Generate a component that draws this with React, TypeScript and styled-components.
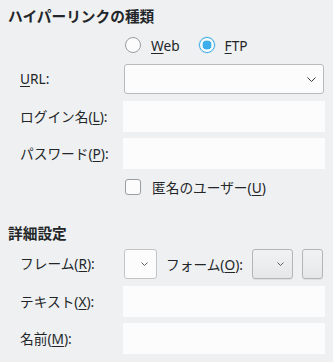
import React from "react";
import styled, { createGlobalStyle } from "styled-components";

const Global = createGlobalStyle`
  html, body { margin: 0; padding: 0; background: #eff0f1; }
  body {
    font-family: "Noto Sans", "Noto Sans CJK JP", sans-serif;
    font-size: 13.7px;
    color: #232629;
  }
  * { box-sizing: border-box; }
`;

const Page = styled.div`
  width: 333px;
  height: 362px;
  padding: 8px 8px 0 8px;
  display: flex;
  flex-direction: column;
  background: #eff0f1;
`;

const SectionTitle = styled.div<{ $mt?: number }>`
  font-weight: bold;
  font-size: 14.7px;
  line-height: 16px;
  height: 16px;
  margin-top: ${(p) => p.$mt ?? 0}px;
  white-space: nowrap;
`;

const Row = styled.div<{ $mt: number; $h: number }>`
  display: flex;
  align-items: center;
  height: ${(p) => p.$h}px;
  margin-top: ${(p) => p.$mt}px;
`;

const Label = styled.div`
  width: 115px;
  flex: none;
  padding-left: 12px;
  white-space: nowrap;
  line-height: 18px;
`;

const Spacer = styled.div`
  width: 115px;
  flex: none;
`;

const U = styled.span`
  text-decoration: underline;
  text-underline-offset: 2px;
`;

const TextField = styled.div`
  flex: 1;
  align-self: stretch;
  background: #fcfcfc;
`;

const Combo = styled.div`
  flex: 1;
  align-self: stretch;
  margin: 0 1px;
  background: #fcfcfc;
  border: 1px solid #b8babc;
  border-radius: 3px;
  display: flex;
  align-items: center;
  justify-content: flex-end;
  padding-right: 7px;
`;

const SmallCombo = styled.div<{ $w: number; $gray?: boolean }>`
  width: ${(p) => p.$w}px;
  flex: none;
  align-self: stretch;
  border: 1px solid ${(p) => (p.$gray ? "#b3b5b7" : "#c2c4c6")};
  border-radius: 3px;
  background: ${(p) =>
    p.$gray ? "linear-gradient(#f1f2f3, #e6e7e8)" : "#fcfcfc"};
  box-shadow: ${(p) => (p.$gray ? "0 1px 0 rgba(0,0,0,0.06)" : "none")};
  display: flex;
  align-items: center;
  justify-content: flex-end;
  padding-right: 8px;
`;

const FrameGroup = styled.div`
  flex: 1;
  align-self: stretch;
  display: flex;
  align-items: center;
  gap: 9px;
  padding-left: 1px;
`;

const InlineLabel = styled.span`
  white-space: nowrap;
`;

const Choice = styled.label`
  display: flex;
  align-items: center;
  gap: 10px;
  white-space: nowrap;
`;

const Choices = styled.div`
  display: flex;
  align-items: center;
  gap: 19px;
  padding-left: 2px;
`;

const RadioCircle = styled.span<{ $on?: boolean }>`
  width: 16px;
  height: 16px;
  border-radius: 50%;
  flex: none;
  border: 1px solid ${(p) => (p.$on ? "#3daee9" : "#9a9c9e")};
  background: ${(p) =>
    p.$on
      ? "radial-gradient(circle, #3daee9 0 4.3px, #d6eefb 4.6px 5.2px, #fcfcfc 5.6px)"
      : "#fcfcfc"};
  box-shadow: ${(p) => (p.$on ? "0 0 0 0.5px rgba(61,174,233,0.4)" : "none")};
`;

const CheckBox = styled.span`
  width: 16px;
  height: 16px;
  flex: none;
  border: 1px solid #9a9c9e;
  border-radius: 3px;
  background: #fcfcfc;
`;

const CheckChoice = styled.label`
  display: flex;
  align-items: center;
  gap: 11px;
  padding-left: 2px;
  white-space: nowrap;
`;

const Chevron = ({ w, h, color }: { w: number; h: number; color: string }) => (
  <svg width={w} height={h} viewBox={`0 0 ${w} ${h}`} style={{ display: "block" }}>
    <polyline
      points={`0.5,0.5 ${w / 2},${h - 0.5} ${w - 0.5},0.5`}
      fill="none"
      stroke={color}
      strokeWidth="1"
    />
  </svg>
);

export default function App() {
  return (
    <>
      <Global />
      <Page>
        <SectionTitle>ハイパーリンクの種類</SectionTitle>
        <Row $mt={11} $h={20}>
          <Spacer />
          <Choices>
            <Choice>
              <RadioCircle />
              <span>
                <U>W</U>eb
              </span>
            </Choice>
            <Choice>
              <RadioCircle $on />
              <span>
                <U>F</U>TP
              </span>
            </Choice>
          </Choices>
        </Row>
        <Row $mt={9} $h={30}>
          <Label>
            <U>U</U>RL:
          </Label>
          <Combo>
            <Chevron w={9} h={5} color="#31363b" />
          </Combo>
        </Row>
        <Row $mt={7} $h={31}>
          <Label>
            ログイン名(<U>L</U>):
          </Label>
          <TextField />
        </Row>
        <Row $mt={6} $h={31}>
          <Label>
            パスワード(<U>P</U>):
          </Label>
          <TextField />
        </Row>
        <Row $mt={6} $h={24}>
          <Spacer />
          <CheckChoice>
            <CheckBox />
            <span>
              匿名のユーザー(<U>U</U>)
            </span>
          </CheckChoice>
        </Row>

        <SectionTitle $mt={26}>詳細設定</SectionTitle>
        <Row $mt={8} $h={30}>
          <Label>
            フレーム(<U>R</U>):
          </Label>
          <FrameGroup>
            <SmallCombo $w={33}>
              <Chevron w={7} h={4} color="#5a5e62" />
            </SmallCombo>
            <InlineLabel>
              フォーム(<U>O</U>):
            </InlineLabel>
            <SmallCombo $w={41} $gray>
              <Chevron w={7} h={4} color="#5a5e62" />
            </SmallCombo>
            <SmallCombo $w={21} $gray />
          </FrameGroup>
        </Row>
        <Row $mt={7} $h={31}>
          <Label>
            テキスト(<U>X</U>):
          </Label>
          <TextField />
        </Row>
        <Row $mt={6} $h={31}>
          <Label>
            名前(<U>M</U>):
          </Label>
          <TextField />
        </Row>
      </Page>
    </>
  );
}
